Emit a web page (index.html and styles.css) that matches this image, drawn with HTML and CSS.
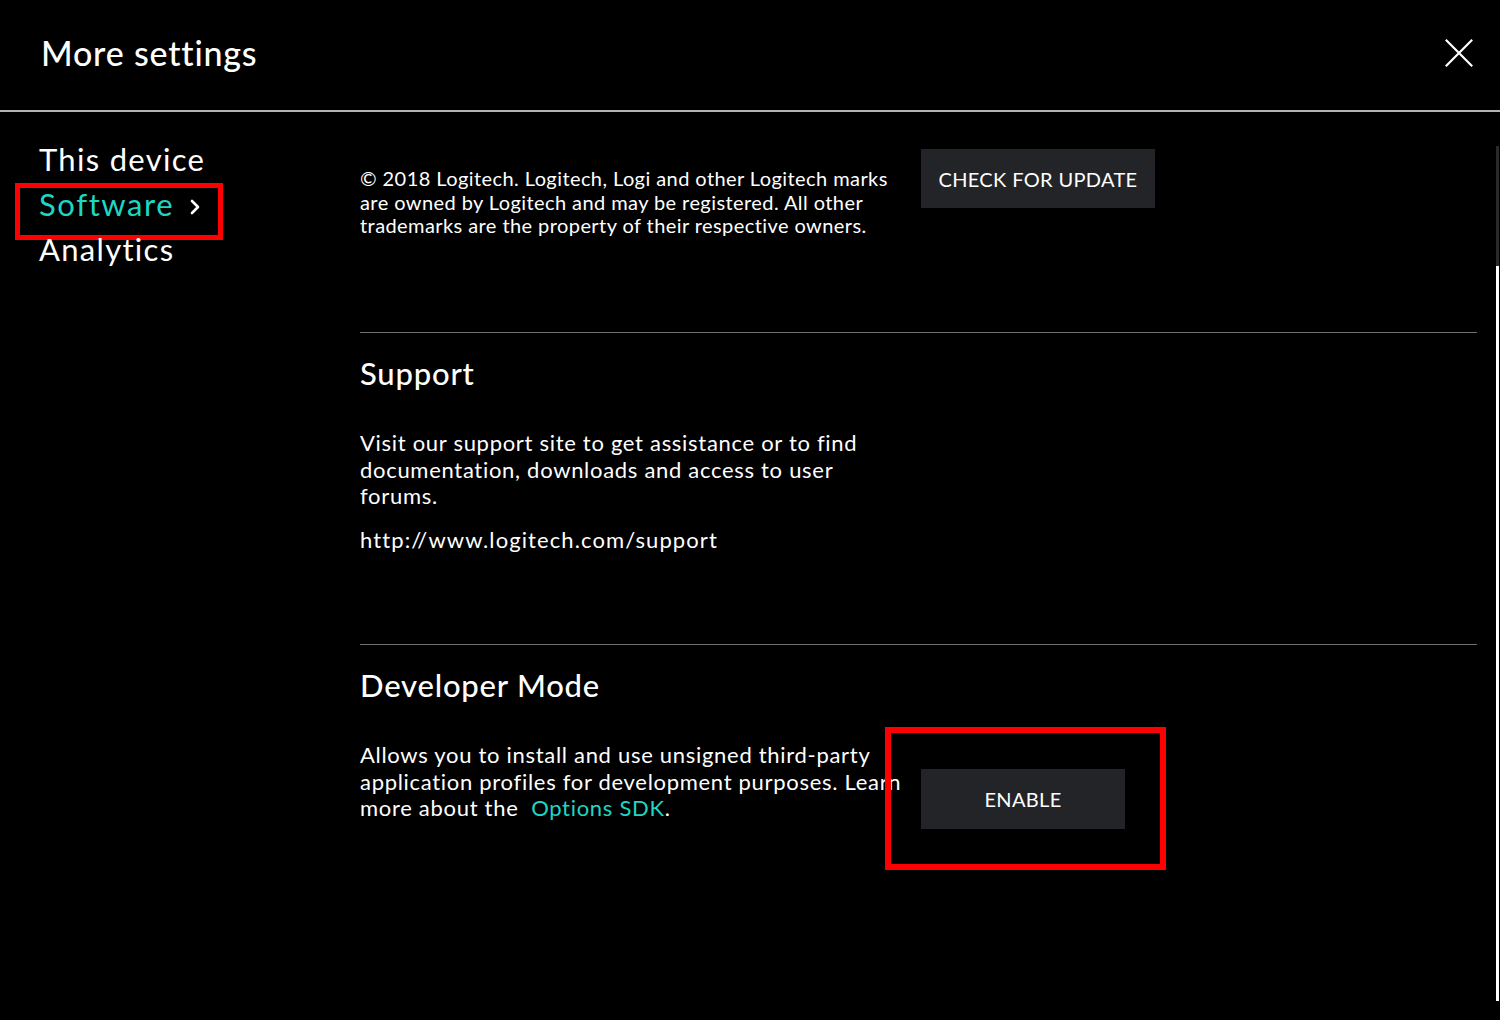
FILE: index.html
```html
<!DOCTYPE html>
<html lang="en">
<head>
<meta charset="utf-8">
<title>More settings</title>
<link rel="stylesheet" href="styles.css">
</head>
<body>
<div class="app">
  <header class="topbar">
    <h1 class="title">More settings</h1>
    <button class="close" aria-label="Close">
      <svg width="28" height="28" viewBox="0 0 28 28"><path d="M0.8 0.8 L27.2 27.2 M27.2 0.8 L0.8 27.2" stroke="#fff" stroke-width="2.2" fill="none"/></svg>
    </button>
  </header>
  <div class="body">
    <nav class="sidebar">
      <a class="nav-item">This device</a>
      <a class="nav-item active">Software<span class="chev"><svg width="12" height="18" viewBox="0 0 12 18"><path d="M3 3 L9 9 L3 15" stroke="#fff" stroke-width="2.6" fill="none" stroke-linecap="round" stroke-linejoin="round"/></svg></span><span class="mark mark-nav"></span></a>
      <a class="nav-item">Analytics</a>
    </nav>
    <main class="content">
      <section class="section first">
        <p class="legal">© 2018 Logitech. Logitech, Logi and other Logitech marks are owned by Logitech and may be registered. All other trademarks are the property of their respective owners.</p>
        <button class="btn btn-update">CHECK FOR UPDATE</button>
      </section>
      <section class="section support">
        <div class="col">
          <h2 class="heading">Support</h2>
          <p class="text">Visit our support site to get assistance or to find documentation, downloads and access to user forums.</p>
          <p class="text link-text">http://www.logitech.com/support</p>
        </div>
      </section>
      <section class="section dev">
        <div class="col">
          <h2 class="heading">Developer Mode</h2>
          <p class="text">Allows you to install and use unsigned third-party application profiles for development purposes. Learn more about the&nbsp; <a class="teal">Options SDK</a>.</p>
        </div>
        <div class="btn-wrap">
          <button class="btn btn-enable">ENABLE</button>
          <span class="mark mark-enable"></span>
        </div>
      </section>
    </main>
    <div class="scroll">
      <div class="scroll-top"></div>
      <div class="scroll-thumb"></div>
    </div>
  </div>
</div>
</body>
</html>
```

FILE: styles.css
```css
* { box-sizing: border-box; }
html, body { margin: 0; padding: 0; background: #000; }
body {
  width: 1500px;
  height: 1020px;
  overflow: hidden;
  font-family: "Lato", "Open Sans", sans-serif;
  color: #fff;
}
.app { display: flex; flex-direction: column; height: 1020px; }
.topbar {
  height: 112px;
  border-bottom: 2px solid #b4b4b4;
  display: flex;
  align-items: center;
  justify-content: space-between;
  padding: 0 27px 6px 41px;
  flex-shrink: 0;
}
.title {
  margin: 0;
  font-size: 34px;
  font-weight: 500;
  letter-spacing: 0.8px;
}
.close {
  background: none;
  border: 0;
  padding: 0;
  width: 28px;
  height: 28px;
  margin-top: 2px;
  cursor: pointer;
}
.close svg { display: block; }
.body {
  flex: 1;
  display: flex;
  position: relative;
}
.sidebar {
  width: 360px;
  flex-shrink: 0;
  padding: 25px 0 0 39px;
  display: flex;
  flex-direction: column;
}
.nav-item {
  font-size: 31px;
  line-height: 45px;
  height: 45px;
  color: #fff;
  position: relative;
  display: flex;
  align-items: center;
  letter-spacing: 1.3px;
}
.nav-item.active { color: #1ed6c4; letter-spacing: 1.6px; }
.chev { display: inline-flex; margin-left: 15px; margin-top: 4px; }
.mark {
  position: absolute;
  border: 6px solid #ff0000;
  pointer-events: none;
}
.mark-nav {
  left: -24px;
  top: 1px;
  width: 208px;
  height: 57px;
  border-width: 5px;
}
.content {
  width: 1117px;
  flex-shrink: 0;
}
.section {
  display: flex;
  gap: 16px;
  border-bottom: 1px solid #6f6f6f;
}
.section.first { height: 221px; padding-top: 37px; }
.section.support { height: 312px; }
.section.dev { border-bottom: 0; }
.col { width: 545px; }
.legal {
  width: 545px;
  margin: 18px 0 0;
  font-size: 20px;
  line-height: 23.5px;
  letter-spacing: 0.42px;
}
.btn {
  background: #232427;
  color: #fff;
  border: 0;
  font-family: inherit;
  font-size: 20px;
  letter-spacing: 0.35px;
  cursor: pointer;
}
.btn-update { width: 234px; height: 59px; align-self: flex-start; }
.heading {
  margin: 22px 0 0;
  font-size: 31px;
  font-weight: 500;
  line-height: 36px;
  letter-spacing: 0.8px;
}
.text {
  margin: 39px 0 0;
  font-size: 22px;
  line-height: 26.5px;
  letter-spacing: 0.7px;
}
.support .link-text { margin-top: 17px; letter-spacing: 1.1px; }
.teal { color: #1ed6c4; }
.btn-wrap { position: relative; margin-top: 124px; }
.btn-enable { width: 204px; height: 60px; }
.mark-enable {
  left: -36px;
  top: -42px;
  width: 281px;
  height: 143px;
}
.scroll {
  position: absolute;
  left: 1496px;
  top: 34px;
  width: 3px;
  height: 855px;
  display: flex;
  flex-direction: column;
}
.scroll-top { height: 120px; background: #2a2a2a; }
.scroll-thumb { flex: 1; background: #fff; }
```
